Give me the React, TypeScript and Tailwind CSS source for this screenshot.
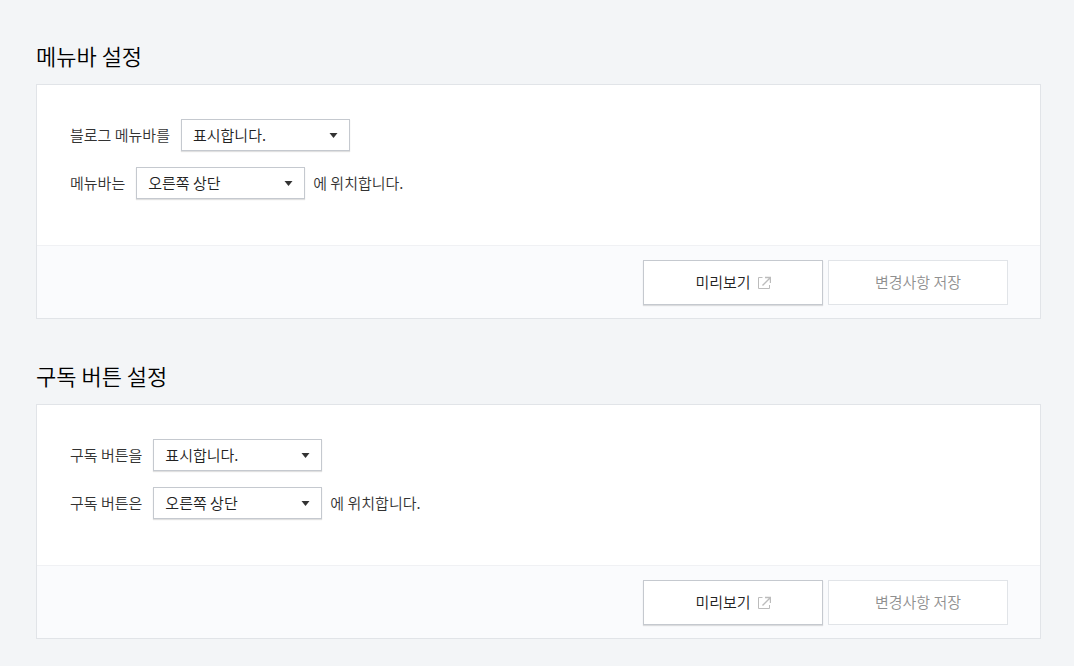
import { useId } from "react";

type Row = {
  label: string;
  options: string[];
  suffix?: string;
};

const sections: { title: string; rows: Row[] }[] = [
  {
    title: "메뉴바 설정",
    rows: [
      { label: "블로그 메뉴바를", options: ["표시합니다.", "표시하지 않습니다."] },
      {
        label: "메뉴바는",
        options: ["오른쪽 상단", "왼쪽 상단"],
        suffix: "에 위치합니다.",
      },
    ],
  },
  {
    title: "구독 버튼 설정",
    rows: [
      { label: "구독 버튼을", options: ["표시합니다.", "표시하지 않습니다."] },
      {
        label: "구독 버튼은",
        options: ["오른쪽 상단", "오른쪽 하단"],
        suffix: "에 위치합니다.",
      },
    ],
  },
];

function OpenIcon() {
  return (
    <svg width="14" height="14" viewBox="0 0 14 14" fill="none" stroke="#bcbcbc" aria-hidden="true">
      <path d="M5.5 1.5h-4v11h11V9" />
      <path d="M8 1.5h5.5V7M13 2L5.5 9.5" strokeWidth="1.4" />
    </svg>
  );
}

function SelectRow({ label, options, suffix }: Row) {
  const id = useId();
  return (
    <div className="flex h-8 items-center gap-2">
      <label htmlFor={id} className="pr-[3px]">
        {label}
      </label>
      <div className="relative">
        <select
          id={id}
          className="block h-8 w-[169px] appearance-none border border-[#c5c9cf] bg-white pl-[11px] pr-8 text-[#222] shadow-[0_1px_1px_rgba(0,0,0,0.12)]"
        >
          {options.map((option) => (
            <option key={option}>{option}</option>
          ))}
        </select>
        <svg
          className="pointer-events-none absolute right-3 top-3.5"
          width="9"
          height="5"
          viewBox="0 0 9 5"
          fill="#333"
          aria-hidden="true"
        >
          <path d="M.5 0h8l-4 5z" />
        </svg>
      </div>
      {suffix && <span>{suffix}</span>}
    </div>
  );
}

function Section({ title, rows }: { title: string; rows: Row[] }) {
  return (
    <section>
      <h2 className="mb-[13px] text-[22px] leading-8 text-black">{title}</h2>
      <div className="border border-[#e1e4e8] bg-white">
        <div className="flex flex-col gap-4 px-[33px] pb-[46px] pt-[34px]">
          {rows.map((row) => (
            <SelectRow key={row.label} {...row} />
          ))}
        </div>
        <div className="flex justify-end gap-[5px] border-t border-[#f0f1f4] bg-[#fafbfd] px-8 pb-[13px] pt-3.5">
          <button
            type="button"
            className="flex h-[45px] w-[180px] items-center justify-center gap-1.5 border border-[#c5c9cf] bg-white text-[#222] shadow-[0_1px_1px_rgba(0,0,0,0.12)]"
          >
            미리보기
            <OpenIcon />
          </button>
          <button
            type="button"
            disabled
            className="h-[45px] w-[180px] border border-[#e1e4e8] bg-white text-[#909090]"
          >
            변경사항 저장
          </button>
        </div>
      </div>
    </section>
  );
}

export default function App() {
  return (
    <main className="flex min-h-screen flex-col gap-10 bg-[#f3f5f7] pb-7 pl-9 pr-[33px] pt-[39px] font-['Noto_Sans_CJK_KR',sans-serif] text-[15px] font-[350] text-[#333]">
      {sections.map((section) => (
        <Section key={section.title} {...section} />
      ))}
    </main>
  );
}
